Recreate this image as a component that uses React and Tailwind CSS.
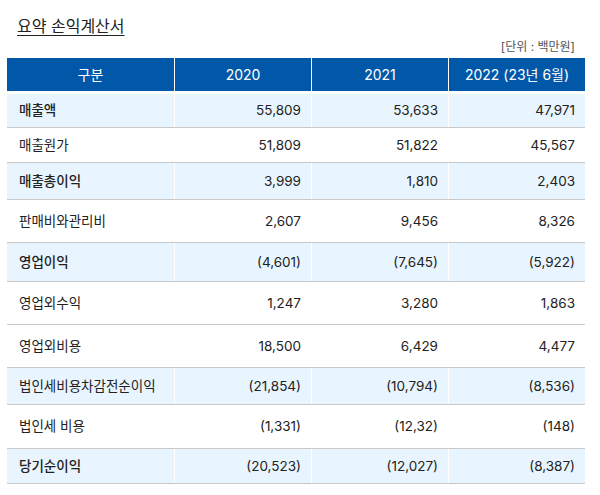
import React from "react";

const rows = [
  { label: "매출액", values: ["55,809", "53,633", "47,971"], blue: true, bold: true, h: "h-[34px]" },
  { label: "매출원가", values: ["51,809", "51,822", "45,567"], h: "h-[35px]" },
  { label: "매출총이익", values: ["3,999", "1,810", "2,403"], blue: true, bold: true, h: "h-[37px]" },
  { label: "판매비와관리비", values: ["2,607", "9,456", "8,326"], h: "h-[43px]" },
  { label: "영업이익", values: ["(4,601)", "(7,645)", "(5,922)"], blue: true, bold: true, h: "h-[39px]" },
  { label: "영업외수익", values: ["1,247", "3,280", "1,863"], h: "h-[43px]" },
  { label: "영업외비용", values: ["18,500", "6,429", "4,477"], h: "h-[43px]" },
  { label: "법인세비용차감전순이익", values: ["(21,854)", "(10,794)", "(8,536)"], blue: true, h: "h-[37px]" },
  { label: "법인세 비용", values: ["(1,331)", "(12,32)", "(148)"], h: "h-[44px]" },
  { label: "당기순이익", values: ["(20,523)", "(12,027)", "(8,387)"], blue: true, bold: true, h: "h-[35px]" },
];

const App = () => {
  return (
    <div className="w-[600px] h-[495px] bg-white font-['Inter','Noto_Sans_CJK_KR',sans-serif] text-[#222]">
      <div className="pl-[17px] pt-[16px]">
        <h2 className="text-[16px] leading-[21px] underline underline-offset-[3px] decoration-1">
          요약 손익계산서
        </h2>
      </div>
      <div className="flex justify-end pr-[25px] mt-[1px]">
        <p className="text-[12px] leading-[18px] text-[#555]">[단위 : 백만원]</p>
      </div>
      <div className="ml-[7px] w-[578px] mt-[2px]">
        <div className="flex h-[33px] bg-[#0258a8] text-white text-[14px]">
          <div className="w-[167px] flex items-center justify-center">구분</div>
          <div className="w-[137px] border-l border-white flex items-center justify-center">2020</div>
          <div className="w-[137px] border-l border-white flex items-center justify-center">2021</div>
          <div className="w-[137px] border-l border-white flex items-center justify-center">
            2022 (23년 6월)
          </div>
        </div>
        <div className="mt-[3px]">
          {rows.map((row) => (
            <div
              key={row.label}
              className={`flex border-b border-[#c9c9c9] text-[13.5px] ${row.h} ${
                row.blue ? "bg-[#e8f5fe]" : "bg-white"
              }`}
            >
              <div
                className={`w-[167px] pl-[12px] flex items-center ${
                  row.bold ? "font-medium" : ""
                }`}
              >
                {row.label}
              </div>
              {row.values.map((v, i) => (
                <div
                  key={i}
                  className="w-[137px] border-l border-white pr-[10px] flex items-center justify-end"
                >
                  {v}
                </div>
              ))}
            </div>
          ))}
        </div>
      </div>
    </div>
  );
};

export default App;
